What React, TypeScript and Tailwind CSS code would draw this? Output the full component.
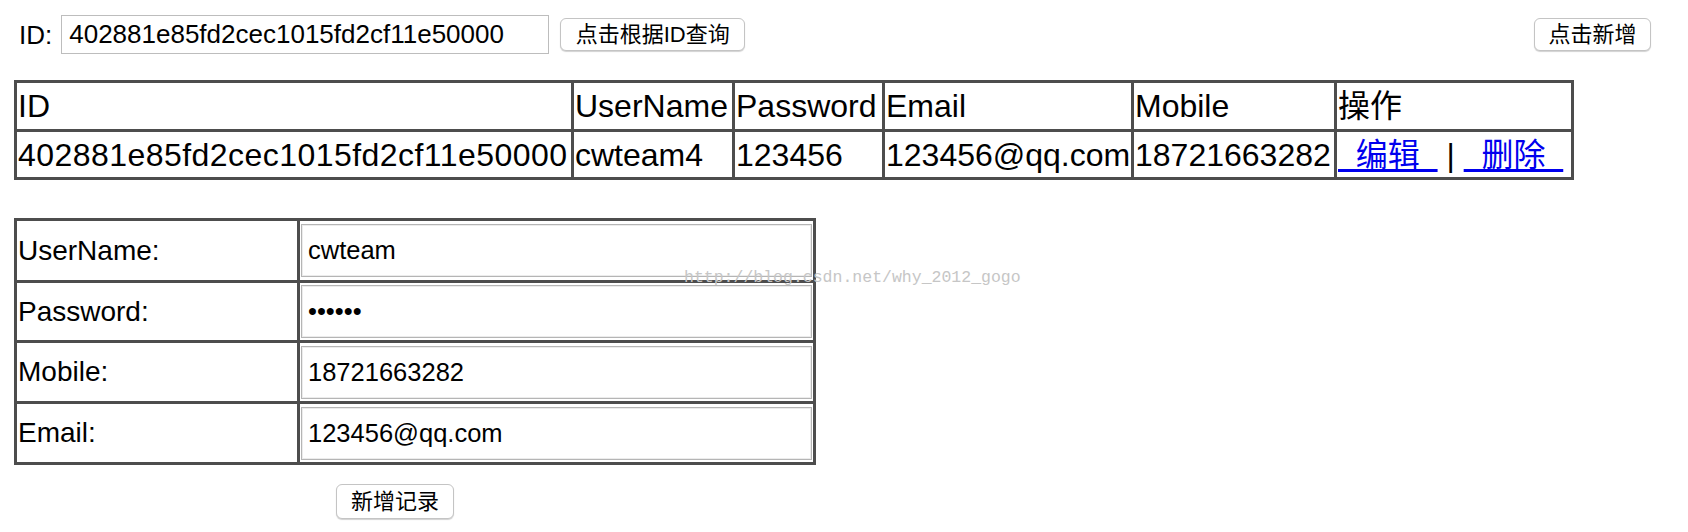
import { useState } from 'react'

type Row = {
  id: string
  userName: string
  password: string
  email: string
  mobile: string
}

const rows: Row[] = [
  {
    id: '402881e85fd2cec1015fd2cf11e50000',
    userName: 'cwteam4',
    password: '123456',
    email: '123456@qq.com',
    mobile: '18721663282',
  },
]

const cell = 'border-[3px] border-[#4d4d4d] px-[1px] align-middle whitespace-nowrap text-left font-normal'
const btn =
  'rounded-[6px] border border-[#c4c4c4] bg-white h-[33px] px-0 text-[22px] leading-none whitespace-nowrap text-black shadow-[0_1px_1px_rgba(0,0,0,0.18)]'

export default function App() {
  const [queryId, setQueryId] = useState('402881e85fd2cec1015fd2cf11e50000')
  const [form, setForm] = useState({
    userName: 'cwteam',
    password: '123456',
    mobile: '18721663282',
    email: '123456@qq.com',
  })

  const fields: { label: string; key: keyof typeof form; type: string }[] = [
    { label: 'UserName:', key: 'userName', type: 'text' },
    { label: 'Password:', key: 'password', type: 'password' },
    { label: 'Mobile:', key: 'mobile', type: 'text' },
    { label: 'Email:', key: 'email', type: 'text' },
  ]
  const rowHeights = ['h-[62px]', 'h-[60px]', 'h-[61px]', 'h-[61px]']

  return (
    <div className="relative w-[1688px] h-[532px] bg-white text-black font-['Liberation_Sans','Noto_Sans_CJK_SC',sans-serif] pt-[15px]">
      {/* query bar */}
      <div className="flex items-center h-[39px] pr-[37px]">
        <span className="ml-[19px] text-[26px] leading-none">ID:</span>
        <input
          value={queryId}
          onChange={e => setQueryId(e.target.value)}
          className="ml-[9px] w-[488px] h-[39px] border border-[#bdbdbd] px-[7px] text-[26px] outline-none"
        />
        <button className={`${btn} ml-[11px] w-[185px]`}>点击根据ID查询</button>
        <button className={`${btn} ml-auto w-[117px]`}>点击新增</button>
      </div>

      {/* list */}
      <table className="ml-[14px] mt-[26px] w-[1557px] table-fixed border-collapse text-[32px] leading-none">
        <colgroup>
          <col className="w-[557px]" />
          <col className="w-[161px]" />
          <col className="w-[150px]" />
          <col className="w-[249px]" />
          <col className="w-[203px]" />
          <col className="w-[237px]" />
        </colgroup>
        <thead>
          <tr className="h-[49px]">
            <th className={cell}>ID</th>
            <th className={cell}>UserName</th>
            <th className={cell}>Password</th>
            <th className={cell}>Email</th>
            <th className={cell}>Mobile</th>
            <th className={cell}>操作</th>
          </tr>
        </thead>
        <tbody>
          {rows.map(r => (
            <tr key={r.id} className="h-[48px]">
              <td className={`${cell} tracking-[0.45px]`}>{r.id}</td>
              <td className={cell}>{r.userName}</td>
              <td className={cell}>{r.password}</td>
              <td className={cell}>{r.email}</td>
              <td className={cell}>{r.mobile}</td>
              <td className={cell}>
                <a href="#" className="text-[#0000ee] underline underline-offset-[3px]">
                  {'\u00a0\u00a0编辑\u00a0\u00a0'}
                </a>{' '}
                |{' '}
                <a href="#" className="text-[#0000ee] underline underline-offset-[3px]">
                  {'\u00a0\u00a0删除\u00a0\u00a0'}
                </a>
              </td>
            </tr>
          ))}
        </tbody>
      </table>

      {/* form */}
      <table className="ml-[14px] mt-[38px] w-[799px] table-fixed border-collapse">
        <colgroup>
          <col className="w-[283px]" />
          <col className="w-[516px]" />
        </colgroup>
        <tbody>
          {fields.map((f, i) => (
            <tr key={f.key} className={rowHeights[i]}>
              <td className={`${cell} text-[28px] leading-none`}>{f.label}</td>
              <td className="border-[3px] border-[#4d4d4d] p-[1px] align-middle">
                <input
                  type={f.type}
                  value={form[f.key]}
                  onChange={e => setForm({ ...form, [f.key]: e.target.value })}
                  className="block w-full h-[53px] border border-[#b5b5b5] shadow-[inset_0_0_0_1px_#ececec] px-[6px] text-[25.5px] outline-none"
                />
              </td>
            </tr>
          ))}
        </tbody>
      </table>

      <button className={`${btn} ml-[336px] mt-[19px] w-[118px] h-[35px]`}>新增记录</button>

      {/* watermark */}
      <div className="absolute left-[684px] top-[268px] text-[16.5px] leading-[20px] text-[#c6c6c6] font-['Liberation_Mono',monospace] pointer-events-none">
        http://blog.csdn.net/why_2012_gogo
      </div>
    </div>
  )
}
